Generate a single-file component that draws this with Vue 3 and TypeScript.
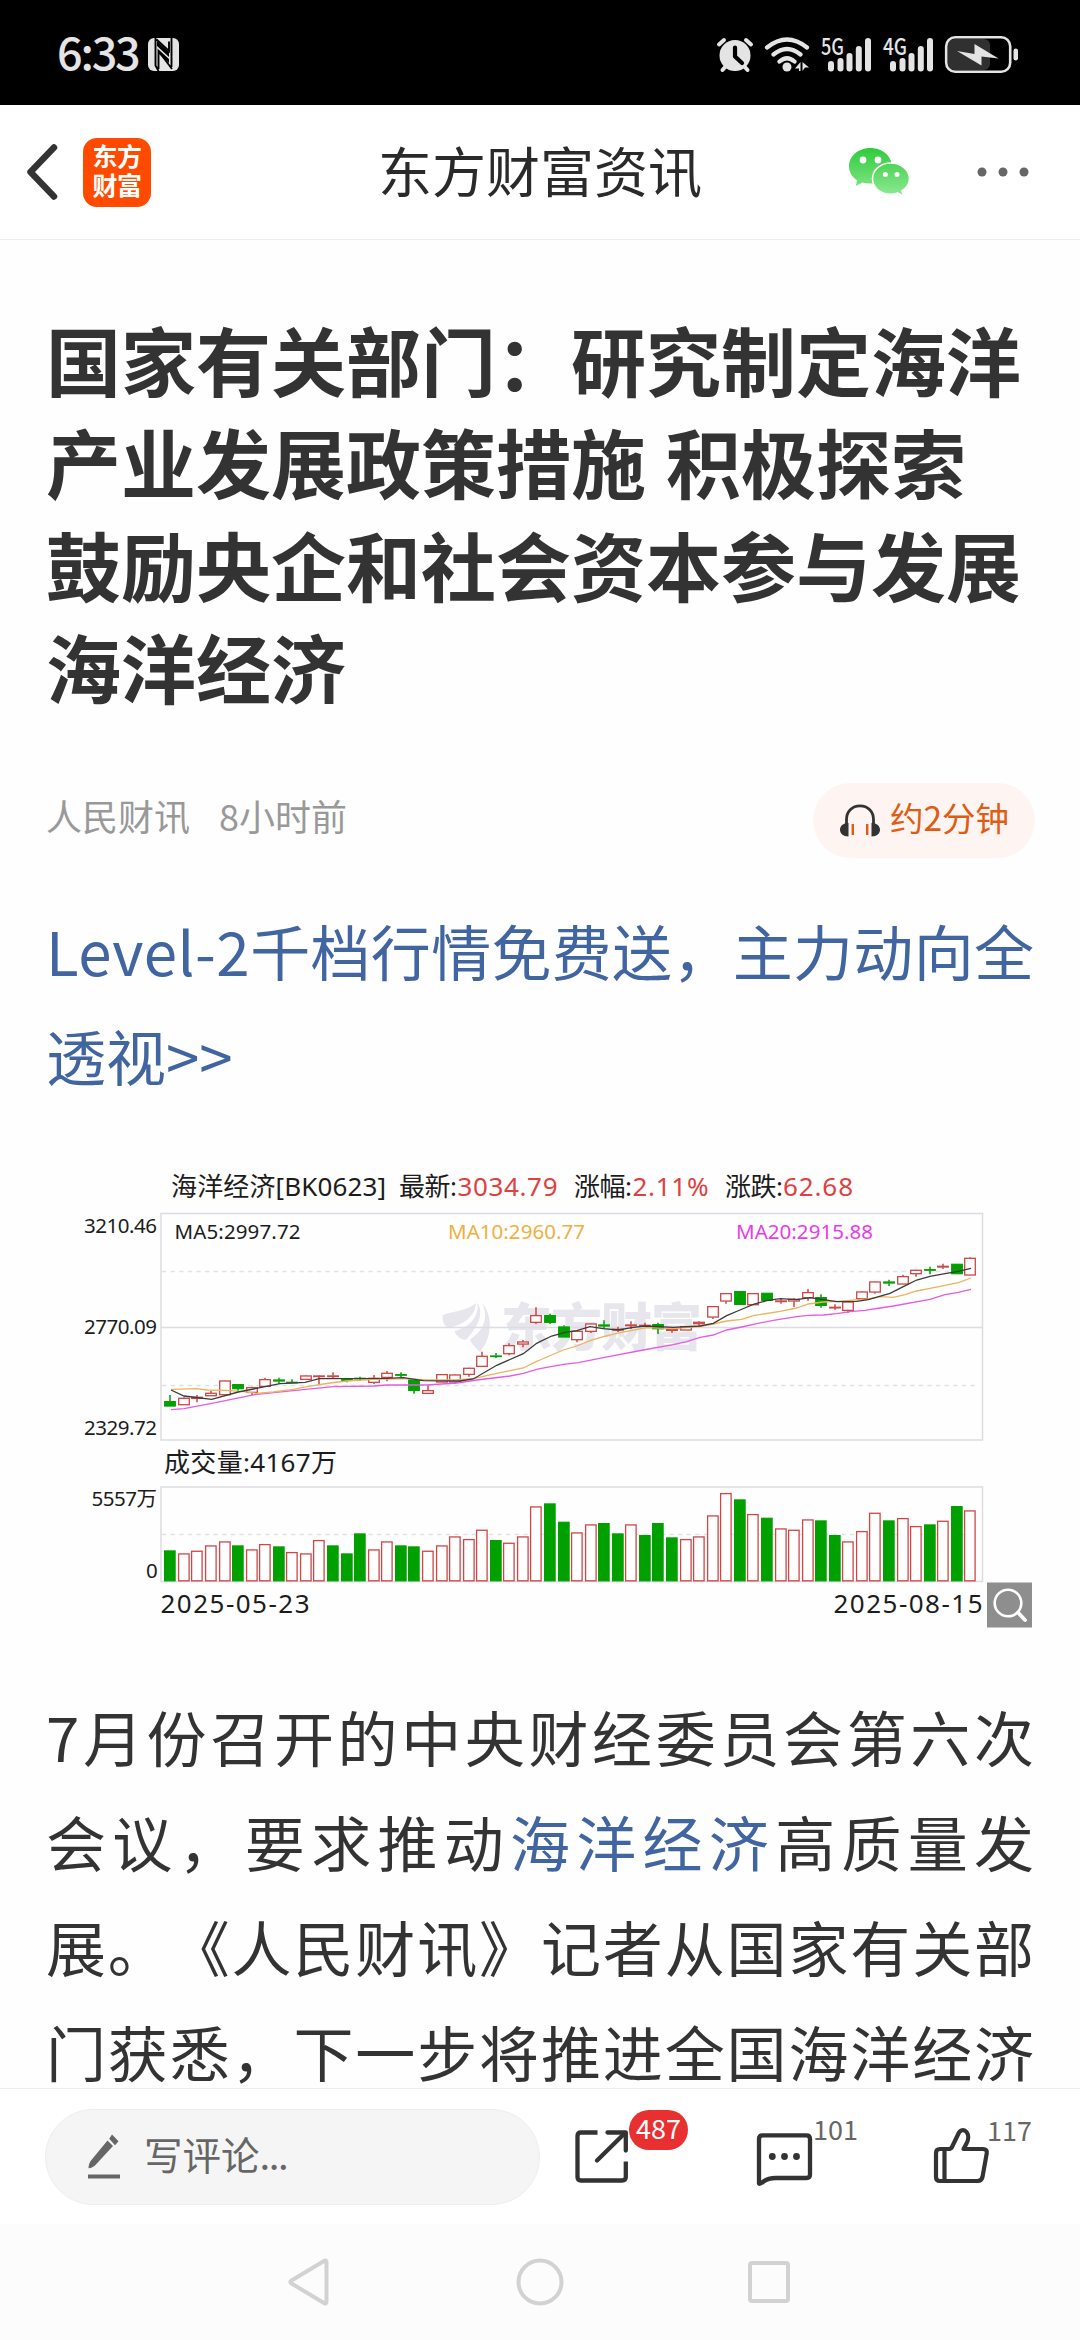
<script setup lang="ts">
type Kind = 'up' | 'down'
interface Candle { kind: Kind; high: number; top: number; bottom: number; low: number }

const STEP = 13.56
const FIRST = 164.3
const BAR = 11.7

// kind, high, body top, body bottom, low (thirds of a pixel from the panel origin)
const rawCandles: [string, number, number, number, number][] = [
  ['g', 735, 754, 769, 769], ['r', 742, 744, 765, 765], ['r', 735, 741, 746, 757], ['r', 722, 729, 738, 738],
  ['r', 691, 692, 735, 735], ['g', 703, 703, 717, 722], ['r', 710, 712, 728, 735], ['r', 683, 688, 710, 710],
  ['g', 683, 689, 694, 701], ['g', 688, 696, 699, 700], ['r', 676, 677, 689, 689], ['r', 676, 677, 679, 704],
  ['r', 667, 677, 679, 684], ['g', 684, 687, 692, 697], ['g', 680, 684, 687, 692], ['r', 675, 684, 698, 702],
  ['r', 663, 669, 683, 694], ['g', 667, 673, 676, 684], ['g', 688, 689, 722, 731], ['r', 706, 721, 731, 731],
  ['r', 672, 673, 697, 697], ['r', 673, 674, 697, 702], ['r', 653, 654, 674, 680], ['r', 605, 618, 650, 650],
  ['g', 609, 617, 620, 624], ['r', 580, 586, 612, 616], ['r', 570, 575, 583, 592], ['r', 472, 496, 518, 522],
  ['g', 491, 496, 518, 522], ['g', 526, 530, 562, 562], ['r', 542, 543, 570, 577], ['r', 520, 521, 545, 549],
  ['g', 511, 524, 529, 537], ['r', 530, 537, 541, 546], ['r', 514, 524, 528, 537], ['r', 518, 525, 528, 529],
  ['g', 518, 523, 537, 552], ['r', 534, 538, 542, 548], ['r', 528, 529, 541, 541], ['r', 514, 516, 522, 528],
  ['r', 468, 469, 502, 507], ['r', 429, 430, 454, 461], ['g', 424, 424, 464, 464], ['r', 429, 430, 465, 465],
  ['g', 429, 429, 452, 452], ['r', 445, 452, 455, 461], ['r', 445, 447, 454, 471], ['r', 417, 427, 444, 452],
  ['g', 433, 442, 467, 473], ['r', 463, 471, 473, 479], ['r', 454, 455, 482, 489], ['r', 424, 425, 447, 447],
  ['r', 394, 395, 427, 431], ['g', 389, 395, 400, 408], ['r', 374, 379, 403, 403], ['r', 359, 360, 372, 380],
  ['g', 350, 358, 360, 373], ['r', 341, 348, 352, 357], ['g', 342, 342, 372, 372], ['r', 322, 324, 376, 376],
]
const candles: Candle[] = rawCandles.map(([k, h, t, b, l]) => ({
  kind: k === 'g' ? 'down' : 'up',
  high: 1150 + h / 3,
  top: 1150 + t / 3,
  bottom: 1150 + b / 3,
  low: 1150 + l / 3,
}))

const volumeTops = [
  361, 370, 362, 346, 334, 346, 358, 342, 349, 366, 370, 330, 346, 370, 310, 358, 334, 346, 349, 362,
  346, 319, 327, 299, 330, 338, 319, 229, 220, 275, 307, 283, 279, 310, 283, 315, 279, 322, 327, 319,
  256, 189, 208, 252, 263, 295, 299, 268, 271, 315, 334, 303, 248, 271, 264, 288, 283, 272, 228, 241,
]
const volumeDown = new Set([0, 5, 8, 12, 13, 14, 17, 18, 24, 28, 29, 32, 33, 35, 36, 37, 42, 44, 48, 49, 53, 56, 58])
const volumes = volumeTops.map((t, i) => ({ top: 1430 + t / 3, kind: (volumeDown.has(i) ? 'down' : 'up') as Kind }))

const barX = (i: number): number => Math.round(FIRST + i * STEP)

type Pt = [number, number]
const toPoints = (left: Pt[], right: Pt[]): string =>
  [...left.map(([x, y]) => [60 + x / 3, 1150 + y / 3]), ...right.map(([x, y]) => [540 + x / 3, 1150 + y / 3])]
    .map(([x, y]) => `${x.toFixed(1)},${y.toFixed(1)}`)
    .join(' ')

const ma5 = toPoints(
  [[333, 720], [372, 738], [455, 748], [535, 726], [615, 710], [660, 701], [735, 697], [778, 686], [980, 685], [1030, 683], [1090, 692], [1200, 693], [1240, 687], [1310, 646], [1390, 611], [1430, 580]],
  [[0, 575], [35, 558], [75, 547], [110, 542], [150, 530], [190, 536], [235, 540], [275, 533], [315, 528], [400, 532], [480, 528], [520, 520], [560, 497], [600, 480], [640, 463], [680, 452], [720, 446], [770, 449], [810, 443], [850, 449], [890, 455], [950, 454], [985, 449], [1050, 430], [1090, 410], [1130, 390], [1170, 379], [1215, 371], [1255, 364], [1293, 355]],
)
const ma10 = toPoints(
  [[333, 718], [410, 716], [440, 720], [500, 721], [550, 725], [590, 730], [640, 726], [700, 718], [740, 710], [810, 699], [860, 693], [940, 688], [1040, 686], [1100, 690], [1180, 690], [1240, 686], [1310, 670], [1390, 654], [1430, 634]],
  [[0, 630], [70, 600], [110, 588], [150, 572], [190, 560], [240, 548], [320, 533], [400, 536], [480, 530], [520, 522], [560, 513], [605, 508], [640, 497], [720, 484], [770, 474], [805, 462], [850, 456], [890, 454], [985, 447], [1020, 440], [1060, 442], [1095, 434], [1130, 423], [1170, 415], [1215, 406], [1255, 398], [1293, 384]],
)
const ma20 = toPoints(
  [[333, 779], [372, 776], [455, 760], [540, 743], [590, 733], [700, 722], [820, 710], [940, 708], [980, 705], [1100, 705], [1190, 699], [1250, 690], [1350, 678], [1390, 670], [1430, 658]],
  [[0, 656], [70, 643], [115, 638], [190, 623], [310, 600], [400, 584], [440, 575], [480, 562], [520, 555], [560, 540], [605, 531], [650, 521], [700, 511], [770, 500], [805, 496], [850, 495], [890, 491], [930, 485], [975, 481], [1020, 474], [1060, 468], [1170, 448], [1215, 434], [1255, 427], [1293, 418]],
)

const headline = ['国家有关部门：研究制定海洋', '产业发展政策措施 积极探索', '鼓励央企和社会资本参与发展', '海洋经济']
</script>

<template>
  <div class="screen">
    <div class="status">
      <span class="clock">6:33</span>
      <svg class="nfc" viewBox="0 0 31 33" width="31" height="33">
        <rect width="31" height="33" rx="6" fill="#e4e4e4" />
        <path d="M7.500 0V27.500L10.500 33M8.500 1.500 21 13V3.500M10.500 31V13L24 31M23.500 0V29" fill="none" stroke="#000" stroke-width="1.900" />
        <path d="M11 12 21 21V25L11 16ZM9 3 21 14V19L9 8Z" fill="#000" />
      </svg>
      <svg class="status-icons" viewBox="710 30 320 46" width="320" height="46">
        <g fill="#e4e4e4" stroke="#e4e4e4" stroke-linecap="round">
          <circle cx="735" cy="54.500" r="15.500" stroke="none" />
          <path d="M719 43.500 724 39M751 43.500 746 39M726 65 722.500 69M744 65 747.500 69" stroke-width="4" fill="none" />
          <path d="M735 46.500V55.500L742 62" stroke="#000" stroke-width="4.200" fill="none" stroke-linejoin="round" />
          <path d="M767 46.500Q787 30.500 807 46.500M773.500 53.500Q787 42.500 800.500 53.500M779.500 60.500Q787 54 794.500 60.500" stroke-width="4.200" fill="none" />
          <circle cx="787" cy="66" r="4.500" stroke="none" />
          <path d="M795 67.500 800.500 61V70H799V67.500ZM802.500 61 809 66.500H805L802.500 70Z" stroke="none" />
          <g stroke="none">
            <rect x="828" y="60" width="6" height="10.500" rx="3" />
            <rect x="837.500" y="57" width="6" height="13.500" rx="3" />
            <rect x="846.500" y="52" width="6" height="18.500" rx="3" />
            <rect x="855.800" y="45" width="6" height="25.500" rx="3" />
            <rect x="865" y="37" width="6" height="33.500" rx="3" />
            <rect x="890" y="60" width="6" height="10.500" rx="3" />
            <rect x="899.500" y="57" width="6" height="13.500" rx="3" />
            <rect x="908.500" y="52" width="6" height="18.500" rx="3" />
            <rect x="917.800" y="45" width="6" height="25.500" rx="3" />
            <rect x="927" y="37" width="6" height="33.500" rx="3" />
            <text x="821" y="53.500" textLength="23" lengthAdjust="spacingAndGlyphs" class="net">5G</text>
            <text x="883" y="53.500" textLength="24" lengthAdjust="spacingAndGlyphs" class="net">4G</text>
          </g>
        </g>
        <rect x="948" y="38" width="42" height="31" rx="6" fill="#303030" />
        <rect x="946.200" y="36.200" width="64" height="34.500" rx="9" fill="none" stroke="#e4e4e4" stroke-width="2.600" />
        <rect x="1013.500" y="47.500" width="4.500" height="12" rx="2.200" fill="#e4e4e4" />
        <path d="M957 50 974.500 53V43L998.500 57.500 981.500 55.500V64.500Z" fill="#e4e4e4" />
      </svg>
    </div>

    <header class="bar">
      <svg class="back" viewBox="0 0 36 60" width="36" height="60">
        <path d="M30 5.500 6.500 30 30 54.500" fill="none" stroke="#333" stroke-width="6.500" stroke-linecap="round" stroke-linejoin="round" />
      </svg>
      <div class="brand"><span>东方</span><span>财富</span></div>
      <h1 class="bar-title">东方财富资讯</h1>
      <svg class="wechat" viewBox="848 146 62 52" width="62" height="52">
        <defs>
          <linearGradient id="wc" gradientUnits="userSpaceOnUse" x1="0" y1="148" x2="0" y2="198">
            <stop offset="0" stop-color="#2fcb3b" />
            <stop offset="1" stop-color="#93ea96" />
          </linearGradient>
        </defs>
        <path d="M870.500 148C858.500 148 849 156 849 166.300 849 172 852 177 857 180.300L855.800 186 862.500 182.500C865 183.300 867.700 183.600 870.500 183.600 882.500 183.600 892 175.900 892 166.300S882.500 148 870.500 148Z" fill="url(#wc)" />
        <path d="M890.700 163C880.500 163 872.500 170 872.500 178.800S880.500 194.300 890.700 194.300C893 194.300 895.500 193.800 897.500 193L903.500 196.300 902 190.800C906.500 188 909.500 183.700 909.500 178.800 909.500 170 901 163 890.700 163Z" fill="url(#wc)" stroke="#fff" stroke-width="1.600" />
        <g fill="#fff">
          <circle cx="863" cy="160" r="3.400" /><circle cx="878" cy="160" r="3.400" />
          <circle cx="885.300" cy="174.500" r="2.500" /><circle cx="897" cy="174.500" r="2.500" />
        </g>
      </svg>
      <svg class="more" viewBox="0 0 52 10" width="52" height="10" fill="#666">
        <circle cx="5" cy="5" r="4.500" /><circle cx="26" cy="5" r="4.500" /><circle cx="47" cy="5" r="4.500" />
      </svg>
    </header>

    <main class="article">
      <h2 class="headline"><span v-for="line in headline" :key="line">{{ line }}</span></h2>

      <div class="meta">
        <span>人民财讯</span>
        <span class="ago">8小时前</span>
        <div class="listen">
          <svg viewBox="0 0 40 33" width="40" height="33">
            <path d="M6.500 21V15.500C6.500 7.500 12 1.800 20 1.800S33.500 7.500 33.500 15.500V21" fill="none" stroke="#333" stroke-width="2.800" />
            <path d="M8.500 19V32.500C3 32.500 0 29.500 0 25.800S3 19 8.500 19ZM31.500 19V32.500C37 32.500 40 29.500 40 25.800S37 19 31.500 19Z" fill="#333" />
            <path d="M12.800 20V31M27.200 20V31" stroke="#e05c14" stroke-width="2.400" />
          </svg>
          <span>约2分钟</span>
        </div>
      </div>

      <a class="promo"><span class="full"><i>Level-2</i>千档行情免费送，主力动向全</span><span>透视&gt;&gt;</span></a>

      <svg class="chart" viewBox="46 1150 988 490" width="988" height="490">
        <g class="t26">
          <text x="171" y="1196" textLength="215">海洋经济[BK0623]</text>
          <text x="399" y="1196" textLength="58">最新:</text>
          <text x="457.500" y="1196" textLength="100" class="red">3034.79</text>
          <text x="574" y="1196" textLength="58">涨幅:</text>
          <text x="632.500" y="1196" textLength="76" class="red">2.11%</text>
          <text x="725" y="1196" textLength="58">涨跌:</text>
          <text x="783" y="1196" textLength="70" class="red">62.68</text>
          <text x="164" y="1472" textLength="173">成交量:4167万</text>
          <text x="160.500" y="1613" textLength="149">2025-05-23</text>
          <text x="833.500" y="1613" textLength="149">2025-08-15</text>
        </g>

        <g class="mark">
          <path d="M442.700 1315C455 1311 466 1311 476 1303.300C475 1316 464 1325 449 1327.500C444.500 1326.500 442 1322 442.700 1315Z" />
          <path d="M477.500 1303.300C485 1314 476 1330 465.500 1340C459.500 1339 456 1335.500 454.500 1331C470 1327 479 1317 477.500 1303.300Z" />
          <path d="M482.300 1303.300C493 1316 492.500 1337 480 1352C475 1347 471 1343 470 1339.500C483 1331 489 1319 482.300 1303.300Z" />
          <text x="501" y="1346" textLength="201">东方财富</text>
        </g>

        <g fill="none" stroke="#dcdce2" stroke-width="1.500">
          <rect x="161" y="1213.500" width="821.500" height="226.500" />
          <rect x="161" y="1487" width="821.500" height="94.500" />
          <path d="M161 1327.500H982" />
          <path d="M162 1271.500H978M162 1385.500H978M162 1534.500H978" stroke="#e2e2e2" stroke-dasharray="4.300 4.300" />
        </g>

        <g class="t20">
          <text x="84" y="1233" textLength="73">3210.46</text>
          <text x="84" y="1333.500" textLength="73">2770.09</text>
          <text x="84" y="1434.500" textLength="73">2329.72</text>
          <text x="91.500" y="1506" textLength="65.500">5557万</text>
          <text x="146" y="1578">0</text>
          <text x="174.500" y="1239" textLength="126">MA5:2997.72</text>
          <text x="448" y="1239" textLength="137" fill="#f0b040">MA10:2960.77</text>
          <text x="736" y="1239" textLength="137" fill="#e83ce8">MA20:2915.88</text>
        </g>

        <g v-for="(c, i) in candles" :key="i" :class="c.kind">
          <path :d="`M${barX(i) + 6} ${c.high}V${c.top}M${barX(i) + 6} ${c.bottom}V${c.low}`" class="wick" />
          <rect :x="barX(i) + 0.7" :y="c.top + 0.3" width="10.600" :height="Math.max(0.6, c.bottom - c.top - 0.6)" />
        </g>
        <g fill="none" stroke-width="1.300">
          <polyline :points="ma20" stroke="#e45ce4" />
          <polyline :points="ma10" stroke="#ecb25c" />
          <polyline :points="ma5" stroke="#3c3c3c" />
        </g>
        <g v-for="(v, i) in volumes" :key="'v' + i" :class="v.kind">
          <rect :x="barX(i) + 0.6" :y="v.top + 0.6" :width="BAR - 1.2" :height="1580.2 - v.top" />
        </g>

        <rect x="987" y="1582.500" width="45" height="45" fill="#8e8e8e" />
        <circle cx="1008" cy="1603" r="13.300" fill="none" stroke="#fff" stroke-width="2.600" />
        <path d="M1018 1612.500 1025 1620" stroke="#fff" stroke-width="3.800" stroke-linecap="round" />
      </svg>

      <p class="body">
        <span class="full">7月份召开的中央财经委员会第六次</span>
        <span class="full">会议，要求推动<a>海洋经济</a>高质量发</span>
        <span class="full">展。《人民财讯》记者从国家有关部</span>
        <span class="full">门获悉，下一步将推进全国海洋经济</span>
      </p>
    </main>

    <footer class="actions">
      <div class="comment">
        <svg viewBox="0 0 32 45" width="32" height="45" fill="#666">
          <path d="M19.500 6.500 25 12 7 31.500C5 33.200 3 34 .500 34.300 .600 31.500 1.200 29 2.800 26.800Z" />
          <path d="M24 .500 30.500 7.300 27 11.200 21.200 4.800Z" />
          <rect x="0" y="40.500" width="32" height="4" />
        </svg>
        <span>写评论<i>...</i></span>
      </div>
      <div class="action share">
        <svg viewBox="575 2128 54 57" width="54" height="57" fill="none" stroke="#333" stroke-width="4.300" stroke-linejoin="round">
          <path d="M597.500 2132.500H581Q577.500 2132.500 577.500 2136V2177Q577.500 2180.500 581 2180.500H622Q625.800 2180.500 625.800 2177V2161.500" />
          <path d="M607.500 2132.500H625.800V2150.500" stroke-linecap="round" />
          <path d="M597 2160.500 625 2133" stroke-linecap="round" />
        </svg>
        <span class="badge">487</span>
      </div>
      <div class="action talk">
        <svg viewBox="756 2131 57 57" width="57" height="57" fill="none" stroke="#333" stroke-width="4.300" stroke-linejoin="round">
          <path d="M759 2183.500V2139Q759 2135.300 762.500 2135.300H806.500Q810 2135.300 810 2139V2174.500Q810 2178 806.500 2178H776Q768 2178 763.500 2181.500Q760 2184.500 759 2183.500Z" />
          <g fill="#333" stroke="none"><circle cx="772.300" cy="2156.500" r="3.400" /><circle cx="784.500" cy="2156.500" r="3.400" /><circle cx="796.500" cy="2156.500" r="3.400" /></g>
        </svg>
        <span class="count">101</span>
      </div>
      <div class="action like">
        <svg viewBox="933 2125 57 60" width="57" height="60" fill="none" stroke="#333" stroke-width="4.200" stroke-linejoin="round">
          <path d="M944.500 2148H948.500Q951 2148 952 2146L958.500 2132.500C960 2129 964 2128 966.500 2131 969 2134 968.500 2139 966.500 2142.500L963.500 2148H983Q987.500 2148 986.700 2152.500L982.500 2176Q981.500 2180 977.500 2180H940Q936 2180 936 2176V2152Q936 2148 940 2148H944.500V2180" />
        </svg>
        <span class="count">117</span>
      </div>
    </footer>

    <nav class="sysnav">
      <svg viewBox="825 2255 48 54" width="48" height="54" fill="none" stroke="#d2d2d2" stroke-width="4" stroke-linejoin="round">
        <path d="M866.500 2262Q866.500 2259.500 864 2261L831.500 2280.500Q829 2282 831.500 2283.500L864 2303Q866.500 2304.500 866.500 2302Z" />
      </svg>
      <svg viewBox="0 0 48 48" width="48" height="48" fill="none" stroke="#d2d2d2" stroke-width="4"><circle cx="24" cy="24" r="21.500" /></svg>
      <svg viewBox="0 0 42 42" width="42" height="42" fill="none" stroke="#d2d2d2" stroke-width="4"><rect x="2" y="2" width="38" height="38" rx="2" /></svg>
    </nav>
  </div>
</template>

<style>
body { margin: 0; background: #fff; }
</style>

<style scoped>
.screen {
  width: 1080px;
  height: 2340px;
  display: flex;
  flex-direction: column;
  overflow: hidden;
  background: #fefefe;
  color: #333;
  font-family: "Noto Sans CJK SC", sans-serif;
  text-spacing-trim: space-all;
}
svg { display: block; flex: none; }
i { font-style: normal; }

.status { height: 105px; flex: none; background: #000; display: flex; align-items: center; box-sizing: border-box; padding: 3px 50px 0 57px; }
.clock { width: 82px; padding-bottom: 6px; font: 500 45px/46px "Noto Sans CJK SC", sans-serif; letter-spacing: -2.200px; color: #e4e4e4; white-space: nowrap; }
.nfc { margin-left: 9px; }
.status-icons { margin-left: auto; }
.net { font: 500 23px "Noto Sans CJK SC", sans-serif; }

.bar { height: 134px; flex: none; border-bottom: 1px solid #eee; display: flex; align-items: center; background: #fff; }
.back { margin-left: 24px; }
.brand {
  margin-left: 23px; width: 68px; height: 69px; box-sizing: border-box; border-radius: 14px; background: #ff4a00; color: #fff;
  display: flex; flex-direction: column; align-items: center; justify-content: center;
  font-weight: 700; font-size: 25px; line-height: 29.500px; padding-bottom: 4px; flex: none; letter-spacing: -0.500px;
}
.bar-title { margin: 0 0 0 227px; width: 324px; padding-bottom: 4px; font-weight: 400; font-size: 54px; line-height: 80px; white-space: nowrap; color: #2a2a2a; }
.wechat { margin-left: 146px; }
.more { margin-left: 67px; }

.article { flex: 1; min-height: 0; overflow: hidden; padding: 68px 46px 0; }
.headline { margin: 0; font-weight: 700; font-size: 75px; line-height: 102.300px; word-spacing: 3px; }
.headline span { display: block; white-space: nowrap; }

.meta { margin-top: 65.800px; height: 75px; margin-right: -1px; display: flex; align-items: center; font-size: 36px; color: #999; line-height: 50px; }
.meta > span { position: relative; top: -5px; }
.ago { margin-left: 29px; }
.listen { margin-left: auto; width: 222px; height: 75px; border-radius: 38px; background: #fef5f2; color: #e05c14; font-size: 33.500px; display: flex; align-items: center; box-sizing: border-box; padding-left: 27px; gap: 10px; }
.listen span { margin-top: -7px; }

.promo, .body { display: block; font-size: 60px; line-height: 105px; }
.promo { margin-top: 39px; color: #4065a0; }
.promo i { letter-spacing: 0.450px; }
.promo span, .body span { display: block; white-space: nowrap; }
.full { text-align: justify; text-align-last: justify; }

.chart { margin-top: 43px; font-family: "Noto Sans", "Noto Sans CJK SC", sans-serif; }
.t26 { font-size: 26px; fill: #1c1c1c; }
.t20 { font-size: 20.500px; fill: #1c1c1c; }
.red { fill: #e04040; }
.mark { fill: #e6e6ec; font: 900 51px "Noto Sans CJK SC", sans-serif; }
.up rect { fill: #fff; stroke: #cf4646; stroke-width: 1.300; }
.up .wick { stroke: #cf4646; stroke-width: 1.500; }
.down rect { fill: #00a000; stroke: #00a000; stroke-width: 1.200; }
.down .wick { stroke: #00a000; stroke-width: 1.500; }

.body { margin: 43px 0 0; }
.body a { color: #4065a0; }

.actions { height: 135px; flex: none; border-top: 1px solid #eee; display: flex; align-items: center; background: #fff; }
.comment { margin-left: 45px; width: 495px; height: 96px; box-sizing: border-box; border: 1px solid #eee; border-radius: 48px; background: #f5f5f5; display: flex; align-items: center; padding-left: 42px; gap: 24px; font-size: 38.500px; color: #666; }
.comment span { margin-top: -8px; line-height: 60px; }
.comment i { letter-spacing: -1.500px; }
.action { position: relative; display: flex; }
.share { margin-left: 35px; }
.talk { margin-left: 127px; margin-top: 6px; }
.like { margin-left: 120px; margin-top: -2px; }
.badge { position: absolute; left: 54px; top: -18px; width: 59px; height: 40px; border-radius: 20px; background: #e83030; color: #fff; font-size: 27px; line-height: 36px; text-align: center; }
.count { position: absolute; left: 57px; top: -22px; font-size: 27px; line-height: 40px; color: #666; }
.like .count { left: 54px; top: -16px; }

.sysnav { height: 116px; flex: none; background: #fcfcfc; display: flex; align-items: center; }
.sysnav svg:nth-child(1) { margin-left: 285px; }
.sysnav svg:nth-child(2) { margin-left: 183px; }
.sysnav svg:nth-child(3) { margin-left: 184px; }
</style>
